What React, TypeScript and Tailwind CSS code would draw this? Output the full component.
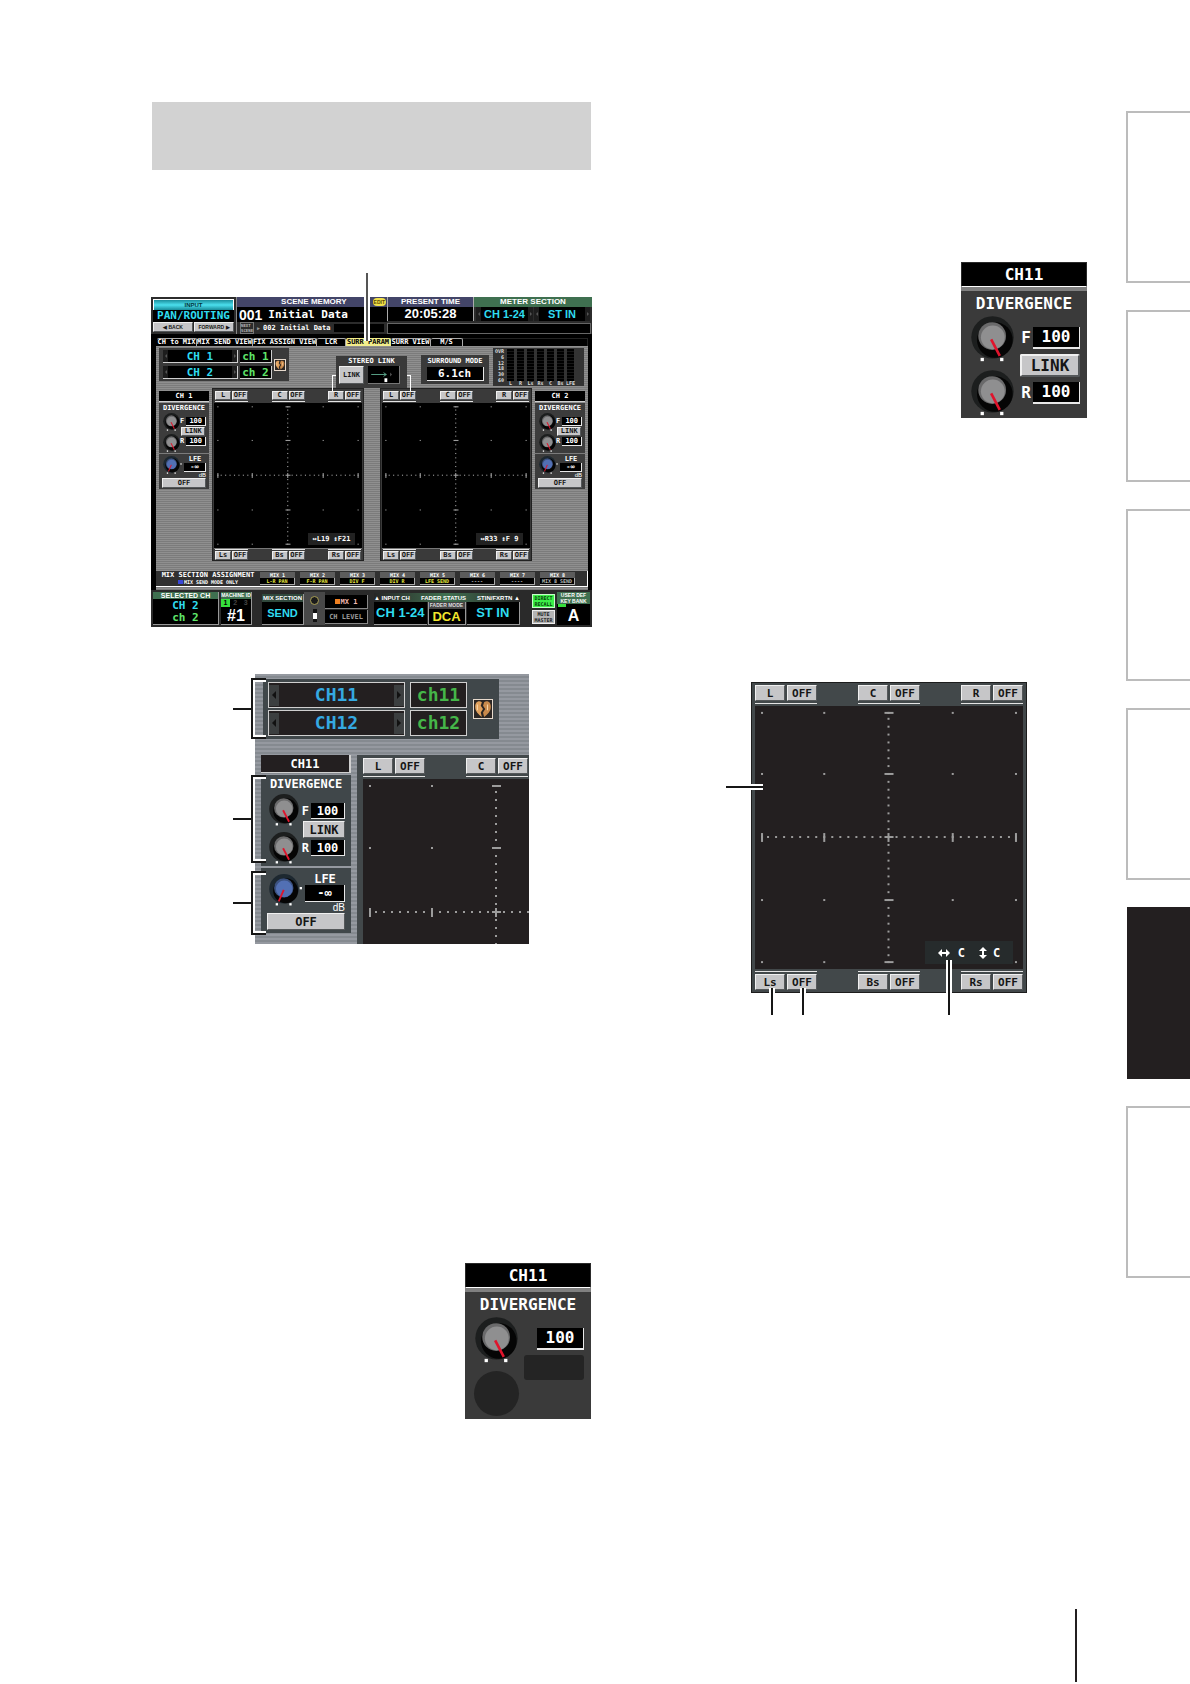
import clsx from "clsx";
import type { ReactNode } from "react";

const MONO = "font-['DejaVu_Sans_Mono',monospace] font-bold";
const SANS = "font-['Liberation_Sans',sans-serif] font-bold";
const BEVEL =
  "flex items-center justify-center bg-[#c6c6c8] border border-t-[#f0f0f0] border-l-[#f0f0f0] border-b-[#55585a] border-r-[#55585a] text-[#161616] leading-none";

type Size = "sm" | "md" | "lg";

function Knob({
  className,
  blue,
  side,
}: {
  className: string;
  blue?: boolean;
  side?: boolean;
}) {
  return (
    <svg viewBox="0 0 130 138" className={clsx("block shrink-0 overflow-visible", className)}>
      <circle cx="65" cy="64" r="64" fill={blue ? "#1d2830" : "#1c1e1e"} />
      <circle cx="72" cy="72" r="54" fill="#050505" />
      <circle cx="64" cy="60" r="42" fill={blue ? "#3c5280" : "#6a6a6b"} />
      <circle cx="66" cy="64" r="36" fill={blue ? "#5270b4" : "#8f8f90"} />
      <path
        d={blue ? "M64 68 L42 118" : "M61 70 L87 120"}
        stroke="#e0142c"
        strokeWidth="8"
      />
      <rect x="29" y="126" width="10" height="10" fill="#fff" />
      <rect x="88" y="126" width="10" height="10" fill="#fff" />
      {side && <rect x="133" y="56" width="10" height="10" fill="#fff" />}
    </svg>
  );
}

function Grid() {
  const major = [7, 69, 133, 197, 260];
  const minor = [];
  for (let k = -15; k <= 15; k++) {
    if (k % 8 !== 0) minor.push(133 + k * 8);
  }
  return (
    <svg viewBox="0 0 267 267" preserveAspectRatio="none" className="block w-full h-full" fill="#9c9c9c">
      {major.map((x) =>
        major.map((y) => (
          <rect key={`${x}-${y}`} x={x - 1} y={y - 1} width="2" height="2" />
        ))
      )}
      {minor.map((p) => (
        <g key={p}>
          <rect x={p - 1} y="132" width="2" height="2" />
          <rect x="132" y={p - 1} width="2" height="2" />
        </g>
      ))}
      {major.map((p) => (
        <g key={p}>
          <rect x={p - 1} y="129" width="2" height="9" />
          <rect x="129" y={p - 1} width="9" height="2" />
        </g>
      ))}
    </svg>
  );
}

function SpeakerRow({
  names,
  size,
  bottom,
}: {
  names: string[];
  size: Size;
  bottom?: boolean;
}) {
  const small = size === "sm";
  return (
    <div
      className={clsx(
        "flex",
        small ? "px-px" : "",
        names.length === 3 ? "justify-between" : "gap-[41px]"
      )}
    >
      {names.map((name) => (
        <div
          key={name}
          className={clsx(
            "flex border-[#e4e4e4]",
            small ? "gap-px" : "gap-[2px]",
            bottom ? "border-t" : "border-b",
            bottom ? (small ? "pt-px" : "pt-[2px]") : small ? "pb-px" : "pb-[2px]"
          )}
        >
          {[name, "OFF"].map((label) => (
            <button
              key={label}
              type="button"
              className={clsx(
                BEVEL,
                MONO,
                small ? "w-4 h-[9px] text-[7px]" : "w-[30px] h-4 text-[11px]"
              )}
            >
              {label}
            </button>
          ))}
        </div>
      ))}
    </div>
  );
}

function Surround({ size, readout }: { size: Size; readout: ReactNode }) {
  const small = size === "sm";
  return (
    <div
      className={clsx(
        "flex flex-col",
        small
          ? "w-[152px] h-[173px] bg-[#3a3a3a] border border-[#222] px-px pt-[2px]"
          : "w-[276px] h-[311px] bg-[#42484a] border border-[#1c1c1c] px-[3px] py-[2px]"
      )}
    >
      <SpeakerRow names={["L", "C", "R"]} size={size} />
      <div
        className={clsx(
          "relative flex-1 min-h-0",
          small ? "bg-black mt-px border-b border-[#777]" : "bg-[#231f20] my-[2px]"
        )}
      >
        <Grid />
        <div
          className={clsx(
            "absolute flex items-center justify-center text-white leading-none whitespace-pre",
            MONO,
            small
              ? "right-[7px] bottom-[3px] w-[47px] h-3 bg-[#222] text-[7px]"
              : "right-[10px] bottom-[5px] w-[88px] h-[23px] bg-[#262b2c] text-[12px]"
          )}
        >
          {readout}
        </div>
      </div>
      <SpeakerRow names={["Ls", "Bs", "Rs"]} size={size} bottom />
    </div>
  );
}

// upper left part of the surround pad
function SurroundCorner() {
  return (
    <div className="flex-1 min-w-0 flex flex-col bg-[#42484a] pl-[6px] pt-[3px] overflow-hidden">
      <SpeakerRow names={["L", "C"]} size="lg" />
      <div className="mt-[2px] w-[267px] h-[267px] shrink-0 bg-[#231f20]">
        <Grid />
      </div>
    </div>
  );
}

function Value({ className, children }: { className: string; children: ReactNode }) {
  return (
    <span
      className={clsx(
        "flex items-center justify-center bg-black text-white leading-none border-r border-b border-[#e8e8e8]",
        className
      )}
    >
      {children}
    </span>
  );
}

function Strip({ name, size }: { name: string; size: "sm" | "md" }) {
  const small = size === "sm";
  const panel = small ? "bg-[#3c3c3c]" : "bg-[#40474a]";
  const text = small ? "text-[7px]" : "text-[12px]";
  const knob = small ? "w-[17px] h-[18px]" : "w-[30px] h-8";
  const value = small ? "w-5 h-[9px]" : "w-[34px] h-4";
  return (
    <div
      className={clsx(
        "flex flex-col shrink-0 text-white leading-none whitespace-pre",
        MONO,
        text,
        small ? "w-[50px]" : "w-[90px]"
      )}
    >
      <div
        className={clsx(
          "flex items-center justify-center border-[#d0d0d0]",
          small ? "h-[11px] bg-black border-b" : "h-[18px] bg-[#231f20] border-b border-r-2"
        )}
      >
        {name}
      </div>
      <div className={clsx("flex flex-col items-center", panel, small ? "h-[50px] mt-px" : "h-[91px] mt-[2px]")}>
        <span className={clsx(small ? "leading-[10px]" : "leading-[19px]")}>DIVERGENCE</span>
        <div className={clsx("flex w-full justify-between", small ? "pl-1 pr-[3px]" : "pl-2 pr-[6px]")}>
          <div className={clsx("flex flex-col", small ? "gap-[3px]" : "gap-[6px]")}>
            <Knob className={knob} />
            <Knob className={knob} />
          </div>
          <div className={clsx("flex flex-col items-end", small ? "gap-px pt-[4px]" : "gap-[2px] pt-[9px]")}>
            <span className="flex items-center">
              F<Value className={clsx("ml-[2px]", value)}>100</Value>
            </span>
            <button
              type="button"
              className={clsx(BEVEL, small ? "w-6 h-[9px] mr-px" : "w-[42px] h-[17px]")}
            >
              LINK
            </button>
            <span className="flex items-center">
              R<Value className={clsx("ml-[2px]", value)}>100</Value>
            </span>
          </div>
        </div>
      </div>
      <div className={clsx(panel, small ? "h-[35px] mt-px" : "h-[65px] mt-[2px]")}>
        <div className={clsx("flex justify-between", small ? "h-[24px] pl-1 pr-[3px] pt-[2px]" : "h-[45px] pl-2 pr-[6px] pt-[6px]")}>
          <Knob className={knob} blue side />
          <div className="flex flex-col items-end">
            <span className={clsx("self-center", small ? "leading-[7px]" : "leading-[11px]")}>LFE</span>
            <Value className={clsx(small ? "w-[22px] h-[9px]" : "w-10 h-[17px]")}>-∞</Value>
            <span
              className={clsx(
                "font-['Liberation_Sans',sans-serif] font-normal",
                small ? "text-[6px] leading-[6px]" : "text-[10px] leading-[11px]"
              )}
            >
              dB
            </span>
          </div>
        </div>
        <button type="button" className={clsx(BEVEL, small ? "w-[44px] h-[10px] mx-[3px]" : "w-[78px] h-[17px] mx-[6px]")}>
          OFF
        </button>
      </div>
    </div>
  );
}

function Arrow({ right, small }: { right?: boolean; small?: boolean }) {
  return (
    <button
      type="button"
      aria-label={right ? "Next channel" : "Previous channel"}
      className={clsx(
        "flex items-center justify-center",
        small ? "w-[5px] h-full bg-[#1d1d1d]" : "w-[10px] h-[21px] bg-[#3c3f40]"
      )}
    >
      <svg viewBox="0 0 4 8" className={clsx(small ? "w-[2px] h-[4px]" : "w-1 h-2", right && "rotate-180")}>
        <path d="M4 0 L0 4 L4 8 Z" fill={small ? "#555" : "#111"} />
      </svg>
    </button>
  );
}

function HeartButton({ className }: { className: string }) {
  return (
    <button
      type="button"
      aria-label="Pair channels"
      className={clsx("flex items-center justify-center bg-[#2c2623] border border-[#e6d9cc]", className)}
    >
      <svg viewBox="0 0 16 16" className="w-full h-full">
        <path d="M7 2 C4 0 1 2 1 6 C1 10 4 13 7 15 L6 11 L8 8 L6 5 Z" fill="#e0a05c" />
        <path d="M9 2 C12 0 15 2 15 6 C15 10 12 13 9 15 L8 11 L10 8 L8 5 Z" fill="#c98a4c" />
        <path d="M3 4 V9 M12 4 V9" stroke="#f6d2a4" strokeWidth="1" />
      </svg>
    </button>
  );
}

function ChannelPicker({ names, labels, size }: { names: string[]; labels: string[]; size: "sm" | "md" }) {
  const small = size === "sm";
  return (
    <div
      className={clsx(
        "flex items-center",
        MONO,
        small
          ? "w-[130px] h-[33px] bg-[#3a3a3a] pl-1 gap-[2px] text-[11px]"
          : "w-[236px] h-[60px] bg-[#40474a] pl-[5px] gap-[6px] text-[18px]"
      )}
    >
      <div className={clsx("flex flex-col", small ? "gap-[3px]" : "gap-[2px]")}>
        {names.map((name, i) => (
          <div key={name} className={clsx("flex", small ? "gap-[2px]" : "gap-[5px]")}>
            <span
              className={clsx(
                "flex items-center justify-between leading-none whitespace-pre border-r border-b border-[#cfcfcf]",
                small
                  ? "w-[75px] h-[13px] bg-black text-[#2fdcf0]"
                  : "w-[137px] h-[26px] bg-[#231f20] text-[#35a9e1] border-t border-l"
              )}
            >
              <Arrow small={small} />
              {name}
              <Arrow right small={small} />
            </span>
            <span
              className={clsx(
                "flex items-center justify-center leading-none whitespace-pre border-r border-b border-[#cfcfcf]",
                small ? "w-[32px] h-[13px] bg-black text-[#5fe66a]" : "w-[57px] h-[26px] bg-[#231f20] text-[#45b649] border-t border-l"
              )}
            >
              {labels[i]}
            </span>
          </div>
        ))}
      </div>
      <HeartButton className={small ? "w-3 h-3" : "w-5 h-5"} />
    </div>
  );
}

const TABS = [
  { label: "CH to MIX", width: "w-10" },
  { label: "MIX SEND VIEW", width: "w-[56px]" },
  { label: "FIX ASSIGN VIEW", width: "w-[64px]" },
  { label: "LCR", width: "w-[29px]" },
  { label: "SURR PARAM", width: "w-[45px]", active: true },
  { label: "SURR VIEW", width: "w-10" },
  { label: "M/S", width: "w-8" },
];

const MIXES = [
  ["MIX 1", "L-R PAN"],
  ["MIX 2", "F-R PAN"],
  ["MIX 3", "DIV F"],
  ["MIX 4", "DIV R"],
  ["MIX 5", "LFE SEND"],
  ["MIX 6", "----"],
  ["MIX 7", "----"],
  ["MIX 8", "MIX 8 SEND"],
];

function ConsoleHeader() {
  return (
    <div className="flex h-[37px] bg-[#2c2c2c] text-white leading-none">
      <div className="w-[85px] p-[2px] flex flex-col">
        <div className={clsx("h-[11px] border-t border-l border-r border-white bg-linear-to-b from-[#1a8f9d] via-[#4be0ee] to-[#178b99] text-center text-[6px] leading-[10px] text-[#04353b]", SANS)}>
          INPUT
        </div>
        <div className={clsx("flex-1 bg-black text-[#2fdcf0] text-[11px] text-center leading-[12px]", MONO)}>
          PAN/ROUTING
        </div>
        <div className={clsx("flex gap-px text-[5px]", SANS)}>
          <button type="button" className={clsx(BEVEL, "flex-1 h-[10px]")}>◀ BACK</button>
          <button type="button" className={clsx(BEVEL, "flex-1 h-[10px]")}>FORWARD ▶</button>
        </div>
      </div>
      <div className="w-[151px] flex flex-col border-l border-[#888]">
        <div className={clsx("h-[10px] bg-[#434568] text-[8px] leading-[10px] flex justify-end", SANS)}>
          <span>SCENE MEMORY</span>
          <span className="ml-[26px] mr-px my-px px-px bg-[#f0e04a] rounded text-[5px] leading-[8px] text-[#5a4a00]">EDIT</span>
        </div>
        <div className="h-[15px] bg-black flex items-center gap-[6px] pl-[2px] whitespace-pre">
          <span className={clsx("text-[14px]", SANS)}>001</span>
          <span className={clsx("text-[11px]", MONO)}>Initial Data</span>
        </div>
        <div className={clsx("flex-1 flex items-center gap-[3px] px-[3px] text-[7px] whitespace-pre", MONO)}>
          <span className="text-[4px] leading-[5px] border border-[#777] text-[#bbb]">NEXT{"\n"}SCENE</span>
          <span className="text-[5px] text-[#999]">▶</span>
          <span>002 Initial Data</span>
          <span className="flex-1 h-2 bg-black" />
        </div>
      </div>
      <div className="flex-1 flex flex-col gap-[2px]">
        <div className="flex h-6">
          <div className="w-[87px] border-l border-r border-[#aaa] bg-black text-center">
            <div className={clsx("h-[10px] bg-[#434568] text-[8px] leading-[10px]", SANS)}>PRESENT TIME</div>
            <div className={clsx("text-[13px] leading-[14px]", SANS)}>20:05:28</div>
          </div>
          <div className="flex-1 text-center flex flex-col">
            <div className={clsx("h-[10px] bg-[#3f7050] text-[8px] leading-[10px]", SANS)}>METER SECTION</div>
            <div className={clsx("flex-1 flex gap-px px-[2px] text-[11px] text-[#2fdcf0]", SANS)}>
              <span className="w-[57px] flex items-center justify-between bg-black">
                <Arrow small /> CH 1-24 <Arrow small right />
              </span>
              <span className="flex-1 flex items-center justify-between bg-black">
                <Arrow small /> ST IN <Arrow small right />
              </span>
            </div>
          </div>
        </div>
        <div className="flex-1 bg-black border border-[#666] mr-px" />
      </div>
    </div>
  );
}

function MeterBridge() {
  return (
    <div className="w-[91px] h-[38px] ml-1 bg-[#333] text-[#ddd] text-[5px] flex pt-px gap-[3px]">
      <div className={clsx("w-[11px] flex flex-col items-end justify-between h-[34px] leading-[5px]", MONO)}>
        <span>OVR</span>
        <span>6</span>
        <span>12</span>
        <span>18</span>
        <span>30</span>
        <span>60</span>
      </div>
      <div className="flex gap-[3px]">
        {["L", "R", "Ls", "Rs", "C", "Bs", "LFE"].map((ch) => (
          <div key={ch} className={clsx("w-[7px] flex flex-col items-center leading-[4px]", MONO)}>
            <span className="w-[7px] h-[32px] bg-[repeating-linear-gradient(#000_0_2px,#161616_2px_3px)]" />
            <span>{ch}</span>
          </div>
        ))}
      </div>
    </div>
  );
}

function ConsoleBody() {
  return (
    <div className="ml-[5px] mr-1 pt-[2px] pb-[3px] bg-[repeating-linear-gradient(#8f8f8f_0_1px,#7b7b7b_1px_2px)]">
      <div className="flex h-10 px-[3px] items-start">
        <ChannelPicker names={["CH 1", "CH 2"]} labels={["ch 1", "ch 2"]} size="sm" />
        <div className={clsx("relative w-[71px] h-8 mt-2 ml-[47px] bg-[#3a3a3a] text-white text-[7px] leading-[10px] text-center", MONO)}>
          STEREO LINK
          <div className="flex gap-1 pl-[3px]">
            <button type="button" className={clsx(BEVEL, "w-[25px] h-[18px]")}>LINK</button>
            <span className="w-[32px] h-[18px] bg-black border-r border-b border-[#777] flex">
              <svg viewBox="0 0 32 18" className="w-full h-full">
                <path d="M3 9 H19 M16 7 L19 9 L16 11" stroke="#5aa58a" fill="none" />
                <rect x="17" y="13" width="3" height="4" fill="#fff" />
                <path d="M23 7 L25 9 L23 11 Z" fill="#555" />
              </svg>
            </span>
          </div>
          <span className="absolute -left-1 top-[19px] w-1 h-4 border-l border-t border-white" />
          <span className="absolute -right-1 top-[19px] w-1 h-4 border-r border-t border-white" />
        </div>
        <div className={clsx("w-[68px] h-[29px] mt-[7px] ml-[14px] bg-[#3a3a3a] text-white text-[7px] leading-[12px] flex flex-col items-center", MONO)}>
          SURROUND MODE
          <Value className="w-[57px] h-[14px] text-[11px]">6.1ch</Value>
        </div>
        <MeterBridge />
      </div>
      <div className="flex h-[183px] px-[3px] items-start">
        <div className="pt-[3px] pr-[3px]">
          <Strip name="CH 1" size="sm" />
        </div>
        <Surround size="sm" readout="↔L19 ↕F21" />
        <div className="flex-1" />
        <Surround size="sm" readout="↔R33 ↕F 9" />
        <div className="pt-[3px] pl-[3px]">
          <Strip name="CH 2" size="sm" />
        </div>
      </div>
      <div className={clsx("flex items-center h-4 bg-[#303030] border-r border-b border-white text-white text-[6px] leading-[7px]", MONO)}>
        <div className="w-[104px] text-center whitespace-nowrap">
          <p className="text-[7px]">MIX SECTION ASSIGNMENT</p>
          <p className="text-[5px] flex items-center justify-center gap-px">
            <span className="w-[5px] h-1 bg-[#3a48d8]" />
            MIX SEND MODE ONLY
          </p>
        </div>
        <div className="flex-1 flex gap-[5px] pr-3 text-center whitespace-nowrap">
          {MIXES.map(([mix, use], i) => (
            <div key={mix} className="flex-1 min-w-0 text-[5px] leading-[6px]">
              <p className="bg-[#5c5c5c]">{mix}</p>
              <p className={clsx("bg-black border-r border-b border-[#aaa]", i < 5 ? "text-[#e6e640]" : "text-[#bbb]")}>{use}</p>
            </div>
          ))}
        </div>
      </div>
    </div>
  );
}

function ConsoleFooter() {
  return (
    <div className={clsx("flex h-[37px] py-[2px] px-[2px] bg-[#2a2a2a] text-white leading-none whitespace-nowrap", SANS)}>
      <div className="w-[66px] bg-black border-r border-b border-[#999] text-center">
        <p className="bg-[#3f7050] text-[7px] leading-[7px]">SELECTED CH</p>
        <p className={clsx("text-[11px] leading-[13px] text-[#2fdcf0] whitespace-pre", MONO)}>CH 2</p>
        <p className={clsx("text-[11px] leading-[12px] text-[#5fe66a] whitespace-pre", MONO)}>ch 2</p>
      </div>
      <div className="w-[31px] ml-[2px] bg-black border-r border-b border-[#999] text-center">
        <p className="bg-[#3f7050] text-[5px] leading-[7px]">MACHINE ID</p>
        <p className="flex text-[7px] leading-[8px] text-[#444]">
          <span className="w-[9px] bg-[#36e03c] text-black">1</span>
          <span className="flex-1">2</span>
          <span className="flex-1">3</span>
        </p>
        <p className="text-[16px] leading-[17px]">#1</p>
      </div>
      <div className="w-[42px] ml-[10px] mt-[2px] bg-black border-r border-b border-[#999] text-center">
        <p className="bg-[#30483c] text-[6px] leading-[8px]">MIX SECTION</p>
        <p className="text-[11px] leading-[22px] text-[#2fdcf0]">SEND</p>
      </div>
      <div className="w-[21px] flex flex-col items-center pt-1 gap-1 bg-[#484848]">
        <span className="w-[9px] h-[9px] rounded-full bg-[#1b1b1b] border border-[#aaa055]" />
        <span className="w-1 h-[13px] bg-[#111] flex items-center"><span className="w-1 h-[6px] bg-white" /></span>
      </div>
      <div className={clsx("w-[43px] flex flex-col gap-px pt-[3px] text-center text-[7px]", MONO)}>
        <p className="h-[14px] leading-[14px] bg-black border-r border-b border-[#888] flex items-center justify-center gap-px text-[#f2b8b0]">
          <span className="w-[5px] h-[5px] bg-[#f08020]" />
          MX 1
        </p>
        <p className="h-[14px] leading-[14px] bg-black border-r border-b border-[#888] text-[#999]">CH LEVEL</p>
      </div>
      <div className="flex-1 ml-[6px] mr-3 pt-px flex flex-col">
        <div className="flex justify-between items-center h-[9px] text-[6px] bg-linear-to-r from-[#262626] via-[#3f7050] to-[#262626]">
          <span>▲ INPUT CH</span>
          <span>FADER STATUS</span>
          <span>STIN/FXRTN ▲</span>
        </div>
        <div className="flex-1 flex gap-px text-[13px] text-center text-[#2fdcf0]">
          <span className="flex-1 bg-black border-b border-[#999] leading-[22px]">CH 1-24</span>
          <span className="w-[38px] bg-black border-b border-x border-[#999] text-[#f2e62e] flex flex-col">
            <span className="text-[5px] leading-[7px] bg-[#444] text-[#ddd]">FADER MODE</span>
            <span className="leading-[15px]">DCA</span>
          </span>
          <span className="flex-1 bg-black border-b border-r border-[#999] leading-[22px]">ST IN</span>
        </div>
      </div>
      <div className={clsx("w-[23px] flex flex-col gap-[2px] pt-[2px] text-[5px] leading-[6px]", MONO)}>
        <button type="button" className="h-[14px] bg-[#3cf048] text-[#06400a] border border-[#c6ffc9] leading-[6px]">
          DIRECT<br />RECALL
        </button>
        <button type="button" className="h-[14px] bg-[#b4b4b4] text-[#222] border border-[#eee] leading-[6px]">
          MUTE<br />MASTER
        </button>
      </div>
      <div className="w-[33px] ml-[2px] flex flex-col bg-black text-center">
        <p className="bg-[#3f7050] text-[5px] leading-[6px]">USER DEF<br />KEY BANK</p>
        <span className="w-2 h-[3px] ml-px bg-[#36e03c]" />
        <p className="text-[16px] leading-[18px]">A</p>
      </div>
    </div>
  );
}

function Console() {
  return (
    <div className="relative bg-black">
      <ConsoleHeader />
      <div className={clsx("flex h-3 items-end pl-[6px] text-white text-[7px]", MONO)}>
        {TABS.map((tab) => (
          <button
            key={tab.label}
            type="button"
            className={clsx(
              "h-2 leading-[7px] whitespace-nowrap flex justify-center rounded-t-[2px] border-t border-r",
              tab.width,
              tab.active ? "bg-[#f3ee8c] border-[#f3ee8c] text-black" : "border-[#aaa]"
            )}
          >
            {tab.label}
          </button>
        ))}
        <span className="flex-1 h-2 mr-1 border-t border-r border-[#222]" />
      </div>
      <ConsoleBody />
      <ConsoleFooter />
      <span className="absolute left-[213px] -top-6 w-[6px] h-[68px] bg-[#555] border-x-2 border-white" />
    </div>
  );
}

function Bracket({ className }: { className: string }) {
  return (
    <div className={clsx("absolute -left-1 w-[15px] border-l-2 border-y-2 border-[#161616]", className)}>
      <div className="h-full border-y-2 border-white" />
      <span className="absolute right-full top-1/2 -mt-px w-5 h-[2px] bg-[#161616]" />
    </div>
  );
}

function ChannelDetail() {
  return (
    <div className="relative w-[274px] h-[270px] ml-[104px]">
      <div className="h-full flex flex-col bg-[repeating-linear-gradient(#9599a0_0_2px,#858a90_2px_4px)]">
        <div className="pt-[5px] pl-2">
          <ChannelPicker names={["CH11", "CH12"]} labels={["ch11", "ch12"]} size="md" />
        </div>
        <div className="flex-1 min-h-0 flex gap-[6px] pl-[6px] pt-4">
          <Strip name="CH11" size="md" />
          <SurroundCorner />
        </div>
      </div>
      <Bracket className="top-1 h-[61px]" />
      <Bracket className="top-[101px] h-[88px]" />
      <Bracket className="top-[197px] h-[64px]" />
    </div>
  );
}

function DivergencePanel({ single }: { single?: boolean }) {
  return (
    <div className={clsx("w-[126px] h-[156px] bg-[#3a3a3a] text-white text-[16px] leading-none", MONO)}>
      <div className="h-[25px] bg-black border border-[#2a2a2a] border-b-white flex items-center justify-center">CH11</div>
      <div className="h-1 bg-[#808080]" />
      <p className="text-center leading-[25px]">DIVERGENCE</p>
      <div className="flex justify-between pl-[10px] pr-[7px]">
        <div className="flex flex-col gap-2">
          <Knob className="w-[43px] h-[46px]" />
          {single ? (
            <span className="w-[45px] h-[45px] -ml-px rounded-full bg-[#242424]" />
          ) : (
            <Knob className="w-[43px] h-[46px]" />
          )}
        </div>
        <div className="flex flex-col items-end gap-[5px] pt-[11px]">
          <span className="flex items-center gap-[2px]">
            {!single && "F"}
            <Value className="w-[47px] h-[22px] border-b-2">100</Value>
          </span>
          {single ? (
            <span className="w-[60px] h-[25px] rounded-[3px] bg-[#242424]" />
          ) : (
            <>
              <button type="button" className={clsx(BEVEL, "w-[60px] h-[23px] border-2 rounded-[2px]")}>LINK</button>
              <span className="flex items-center gap-[2px]">
                R
                <Value className="w-[47px] h-[22px] border-b-2">100</Value>
              </span>
            </>
          )}
        </div>
      </div>
    </div>
  );
}

function DoubleArrow({ vertical }: { vertical?: boolean }) {
  return (
    <svg viewBox="0 0 12 8" className={clsx("w-3 h-2", vertical && "rotate-90")}>
      <path d="M0 4 L4 0 V3 H8 V0 L12 4 L8 8 V5 H4 V8 Z" fill="#fff" />
    </svg>
  );
}

function SurroundDetail() {
  return (
    <div className="relative ml-[105px] w-[276px]">
      <Surround
        size="lg"
        readout={
          <span className="flex items-center gap-3">
            <span className="flex items-center gap-2">
              <DoubleArrow />
              <span>C</span>
            </span>
            <span className="flex items-center gap-1">
              <DoubleArrow vertical />
              <span>C</span>
            </span>
          </span>
        }
      />
      <span className="absolute -left-[25px] top-[104px] w-[25px] h-[2px] bg-[#161616]" />
      <span className="absolute left-0 top-[102px] w-3 h-[6px] bg-[#161616] border-y-2 border-white" />
      <span className="absolute left-[18px] top-[306px] w-[6px] h-[27px] bg-[#161616] border-x-2 border-white" />
      <span className="absolute left-[49px] top-[306px] w-[6px] h-[27px] bg-[#161616] border-x-2 border-white" />
      <span className="absolute left-[195px] top-[278px] w-[6px] h-[55px] bg-[#161616] border-x-2 border-white" />
    </div>
  );
}

export default function App() {
  return (
    <div className="flex bg-white">
      <main className="flex-1 min-w-0 grid grid-cols-2 gap-x-[54px] pl-[151px] pr-[39px] pt-[102px] pb-[2px]">
        <section>
          <div className="h-[68px] bg-[#d2d2d2] mx-px" />
          <div className="mt-[127px]">
            <Console />
          </div>
          <div className="mt-[47px]">
            <ChannelDetail />
          </div>
          <div className="mt-[319px] pr-px flex justify-end">
            <DivergencePanel single />
          </div>
        </section>
        <section className="pt-[160px]">
          <div className="flex justify-end">
            <DivergencePanel />
          </div>
          <div className="mt-[264px]">
            <SurroundDetail />
          </div>
        </section>
        <footer className="col-span-2 mt-[190px] flex justify-end pr-[10px]">
          <span className="w-[2px] h-[73px] bg-[#231f20]" />
        </footer>
      </main>
      <nav aria-label="Chapters" className="w-16 flex flex-col gap-[27px] pt-[111px]">
        {[1, 2, 3, 4, 5, 6].map((n) => (
          <a
            key={n}
            href={`#chapter-${n}`}
            aria-label={`Chapter ${n}`}
            className={clsx(
              "h-[172px]",
              n === 5 ? "ml-px bg-[#231f20]" : "border-2 border-r-0 border-[#bcbcbc]"
            )}
          />
        ))}
      </nav>
    </div>
  );
}
